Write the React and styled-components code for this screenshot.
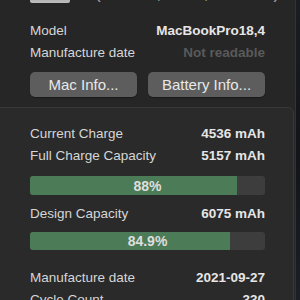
import styled, { createGlobalStyle } from "styled-components";

const GlobalStyle = createGlobalStyle`
  html, body {
    margin: 0;
    padding: 0;
    background: #15171c;
    overflow: hidden;
  }
  body {
    font-family: "Liberation Sans", Arial, sans-serif;
    -webkit-font-smoothing: antialiased;
  }
`;

function App() {
  return (
    <>
      <GlobalStyle />
      <Screen>
        <Window>
          <Header>
            <Thumb />
            <Title>(14-inch, 2021, M1 Max)</Title>
          </Header>

          <Section>
            <Row>
              <Label>Model</Label>
              <Value>MacBookPro18,4</Value>
            </Row>
            <Row>
              <Label>Manufacture date</Label>
              <Value $muted>Not readable</Value>
            </Row>
            <Buttons>
              <Button $width={108}>Mac Info...</Button>
              <Button $width={118}>Battery Info...</Button>
            </Buttons>
          </Section>

          <GroupBox>
            <Row>
              <Label>Current Charge</Label>
              <Value>4536 mAh</Value>
            </Row>
            <Row>
              <Label>Full Charge Capacity</Label>
              <Value>5157 mAh</Value>
            </Row>
            <Bar $top={10} $height={19}>
              <Fill style={{ width: "88%" }} />
              <BarText>88%</BarText>
            </Bar>
            <Row $top={7}>
              <Label>Design Capacity</Label>
              <Value>6075 mAh</Value>
            </Row>
            <Bar $top={8} $height={18}>
              <Fill style={{ width: "84.9%" }} />
              <BarText>84.9%</BarText>
            </Bar>
            <Row $top={16}>
              <Label>Manufacture date</Label>
              <Value>2021-09-27</Value>
            </Row>
            <Row>
              <Label>Cycle Count</Label>
              <Value>330</Value>
            </Row>
          </GroupBox>
        </Window>
        <Desktop />
      </Screen>
    </>
  );
}

export default App;

const Screen = styled.div`
  display: flex;
  width: 300px;
  height: 300px;
  overflow: hidden;
`;

const Window = styled.div`
  width: 295px;
  height: 300px;
  background: #262626;
  border-right: 1px solid #333;
  display: flex;
  flex-direction: column;
  overflow: hidden;
`;

const Desktop = styled.div`
  flex: 1;
  background: linear-gradient(180deg, #1a1d24, #12141a 50%, #1b1f28);
`;

const Header = styled.div`
  display: flex;
  align-items: flex-end;
  height: 24px;
  margin-top: -20px;
  padding-left: 30px;
  gap: 25px;
  flex-shrink: 0;
`;

const Thumb = styled.div`
  width: 40px;
  height: 18px;
  border-radius: 2px;
  background: linear-gradient(180deg, #8a8a8a, #bdbdbd);
  margin-bottom: 1px;
`;

const Title = styled.div`
  font-size: 17px;
  line-height: 20px;
  color: #a9a9a9;
  white-space: nowrap;
`;

const Section = styled.div`
  display: flex;
  flex-direction: column;
  padding: 15px 30px 0 30px;
`;

const Row = styled.div`
  display: flex;
  justify-content: space-between;
  align-items: center;
  height: 22px;
  margin-top: ${(p) => p.$top || 0}px;
  flex-shrink: 0;
`;

const Label = styled.span`
  font-size: 13.5px;
  color: #d6d6d6;
  white-space: nowrap;
`;

const Value = styled.span`
  font-size: 13.5px;
  font-weight: 700;
  color: ${(p) => (p.$muted ? "#5a5a5a" : "#e6e6e6")};
  white-space: nowrap;
`;

const Buttons = styled.div`
  display: flex;
  gap: 11px;
  margin-top: 9px;
`;

const Button = styled.button`
  width: ${(p) => p.$width}px;
  height: 25px;
  border: none;
  border-radius: 5px;
  background: #5d5d5d;
  color: #e8e8e8;
  font-family: "Liberation Sans", Arial, sans-serif;
  font-size: 15px;
  padding: 0;
  box-shadow: 0 1px 1px rgba(0, 0, 0, 0.3);
`;

const GroupBox = styled.div`
  display: flex;
  flex-direction: column;
  margin: 10px 1px 0 -10px;
  padding: 14px 28px 0 39px;
  background: #2a2a2a;
  border: 1px solid #383838;
  border-radius: 6px;
  flex: 1;
`;

const Bar = styled.div`
  position: relative;
  height: ${(p) => p.$height}px;
  margin-top: ${(p) => p.$top}px;
  background: #3d3d3d;
  border-radius: 3px;
  overflow: hidden;
  flex-shrink: 0;
`;

const Fill = styled.div`
  height: 100%;
  background: #4c7b57;
`;

const BarText = styled.div`
  position: absolute;
  inset: 0;
  display: flex;
  align-items: center;
  justify-content: center;
  font-size: 14px;
  font-weight: 700;
  color: #dedede;
`;
